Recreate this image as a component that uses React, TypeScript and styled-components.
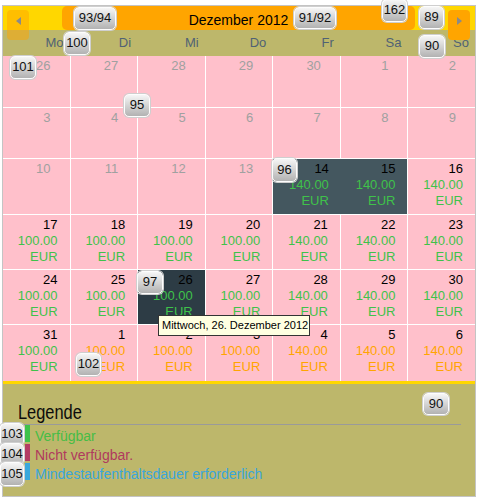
import React from 'react';
import styled, { createGlobalStyle } from 'styled-components';

const Global = createGlobalStyle`
  html, body { margin: 0; padding: 0; background: #fff; }
  body { font-family: "Liberation Sans", Arial, sans-serif; }
  * { box-sizing: border-box; }
`;

const Page = styled.div`
  position: relative;
  width: 481px;
  height: 502px;
  padding: 5px 0 0 2px;
`;

const Widget = styled.div`
  width: 474px;
  border: 1px solid #c4c4c4;
  background: #fff;
`;

const Header = styled.div`
  height: 24px;
  background: #ffd700;
  padding: 0 60px 0 59px;
`;

const TitleBar = styled.div`
  height: 24px;
  background: #ffa500;
  border-radius: 5px;
  text-align: center;
  font-size: 14px;
  line-height: 20px;
  padding-top: 4px;
  color: #000;
`;

const DayRow = styled.div`
  display: grid;
  grid-template-columns: repeat(7, 1fr);
  column-gap: 1px;
  height: 26px;
  background: #bdb76b;
`;

const DayName = styled.div`
  text-align: right;
  padding-right: 6px;
  font-size: 13px;
  line-height: 26px;
  color: #506274;
`;

const Grid = styled.div`
  display: grid;
  grid-template-columns: repeat(7, 1fr);
  grid-template-rows: 51px 50px 55px 54px 54px 56px;
  gap: 1px;
  background: #fff;
`;

type Tone = 'pink' | 'dark' | 'darker';

const Cell = styled.div<{ $tone: Tone; $muted: boolean; $joinRight?: boolean }>`
  background: ${(p) => (p.$tone === 'dark' ? '#44575f' : p.$tone === 'darker' ? '#2d3c45' : '#ffc0cb')};
  padding: 2px ${(p) => (p.$muted ? 19 : 12)}px 0 0;
  margin-right: ${(p) => (p.$joinRight ? -1 : 0)}px;
  text-align: right;
  font-size: 13px;
  line-height: 16px;
`;

const DayNum = styled.div<{ $muted: boolean }>`
  color: ${(p) => (p.$muted ? '#a0a0a0' : '#000')};
`;

const Price = styled.div<{ $next: boolean }>`
  color: ${(p) => (p.$next ? '#ffa500' : '#3fc24a')};
`;

const Legend = styled.div`
  border-top: 3px solid #ffd700;
  background: #bdb76b;
  padding: 16px 14px 14px 15px;
`;

const LegendTitle = styled.h2`
  margin: 0;
  font-weight: normal;
  font-size: 20px;
  line-height: 24px;
  height: 25px;
  color: #000;
  border-bottom: 1px solid #9a9a9a;
`;

const TitleText = styled.span`
  display: inline-block;
  font-family: "Liberation Sans Narrow", "Liberation Sans", sans-serif;
  transform: scaleX(0.82);
  transform-origin: left center;
  color: #0c0c0c;
`;

const LegendList = styled.div`
  display: grid;
  grid-template-rows: repeat(3, 19px);
  padding-left: 7px;
`;

const LegendItem = styled.div`
  display: flex;
  align-items: flex-start;
  height: 19px;
`;

const LegendBar = styled.span<{ $color: string }>`
  width: 5px;
  height: 17px;
  background: ${(p) => p.$color};
`;

const LegendText = styled.span<{ $color: string }>`
  margin-left: 5px;
  font-size: 14px;
  line-height: 17px;
  padding-top: 3px;
  color: ${(p) => p.$color};
`;

const NavButton = styled.div<{ $x: number; $dim?: boolean }>`
  position: absolute;
  left: ${(p) => p.$x}px;
  top: 10px;
  width: 22px;
  height: 30px;
  border-radius: 4px;
  background: ${(p) => (p.$dim ? 'rgba(255,165,0,0.5)' : '#ffa500')};
  display: flex;
  justify-content: center;
  padding-top: 7px;
`;

const Arrow = styled.span<{ $dir: 'left' | 'right' }>`
  width: 0;
  height: 0;
  border-top: 4px solid transparent;
  border-bottom: 4px solid transparent;
  ${(p) => (p.$dir === 'left' ? 'border-right: 5px solid #8a8a8a;' : 'border-left: 5px solid #8a8a8a;')}
`;

const Tooltip = styled.div`
  position: absolute;
  left: 158px;
  top: 315px;
  width: 152px;
  height: 21px;
  border: 1px solid #333;
  background: #ffffe1;
  font-size: 11px;
  line-height: 19px;
  padding-left: 3px;
  color: #000;
  white-space: nowrap;
`;

const Badge = styled.div<{ $x: number; $y: number; $w: number; $h: number }>`
  position: absolute;
  left: ${(p) => p.$x}px;
  top: ${(p) => p.$y}px;
  width: ${(p) => p.$w}px;
  height: ${(p) => p.$h}px;
  border: 1px solid #fdfdfd;
  border-radius: 5px;
  box-shadow: 0 0 0 1px #cfcfcf;
  background: linear-gradient(#f6f6f6, #b2b2b2);
  font-size: 13px;
  line-height: ${(p) => p.$h - 3}px;
  text-align: center;
  color: #111;
  white-space: nowrap;
`;

type Day = { n: number; muted?: boolean; price?: string; next?: boolean; tone?: Tone; join?: boolean };

const g = (n: number): Day => ({ n, muted: true });
const p = (n: number, price: string, extra: Partial<Day> = {}): Day => ({ n, price, ...extra });

const weeks: Day[][] = [
  [g(26), g(27), g(28), g(29), g(30), g(1), g(2)],
  [g(3), g(4), g(5), g(6), g(7), g(8), g(9)],
  [g(10), g(11), g(12), g(13), p(14, '140.00', { tone: 'dark', join: true }), p(15, '140.00', { tone: 'dark' }), p(16, '140.00')],
  [p(17, '100.00'), p(18, '100.00'), p(19, '100.00'), p(20, '100.00'), p(21, '140.00'), p(22, '140.00'), p(23, '140.00')],
  [p(24, '100.00'), p(25, '100.00'), p(26, '100.00', { tone: 'darker' }), p(27, '100.00'), p(28, '140.00'), p(29, '140.00'), p(30, '140.00')],
  [p(31, '100.00'), p(1, '100.00', { next: true }), p(2, '100.00', { next: true }), p(3, '100.00', { next: true }), p(4, '140.00', { next: true }), p(5, '140.00', { next: true }), p(6, '140.00', { next: true })],
];

const dayNames = ['Mo', 'Di', 'Mi', 'Do', 'Fr', 'Sa', 'So'];

const badges: { t: string; x: number; y: number; w: number; h: number }[] = [
  { t: '93/94', x: 74, y: 7, w: 42, h: 23 },
  { t: '91/92', x: 294, y: 7, w: 42, h: 22 },
  { t: '162', x: 382, y: -1, w: 25, h: 23 },
  { t: '89', x: 419, y: 6, w: 25, h: 23 },
  { t: '100', x: 64, y: 32, w: 26, h: 23 },
  { t: '90', x: 419, y: 35, w: 26, h: 23 },
  { t: '101', x: 10, y: 56, w: 26, h: 23 },
  { t: '95', x: 124, y: 94, w: 26, h: 23 },
  { t: '96', x: 272, y: 158, w: 25, h: 24 },
  { t: '97', x: 137, y: 271, w: 26, h: 23 },
  { t: '102', x: 76, y: 353, w: 25, h: 23 },
  { t: '90', x: 423, y: 393, w: 26, h: 22 },
  { t: '103', x: 0, y: 423, w: 24, h: 23 },
  { t: '104', x: 0, y: 443, w: 24, h: 22 },
  { t: '105', x: 0, y: 462, w: 24, h: 24 },
];

const legend = [
  { label: 'Verfügbar', bar: '#3fc24a', text: '#46bd46' },
  { label: 'Nicht verfügbar.', bar: '#b43c64', text: '#b03a5e' },
  { label: 'Mindestaufenthaltsdauer erforderlich', bar: '#3aa8dc', text: '#3aa6dc' },
];

export default function App() {
  return (
    <Page>
      <Global />
      <Widget>
        <Header>
          <TitleBar>Dezember 2012</TitleBar>
        </Header>
        <DayRow>
          {dayNames.map((d) => (
            <DayName key={d}>{d}</DayName>
          ))}
        </DayRow>
        <Grid>
          {weeks.flat().map((d, i) => (
            <Cell key={i} $tone={d.tone ?? 'pink'} $muted={!!d.muted} $joinRight={d.join}>
              <DayNum $muted={!!d.muted}>{d.n}</DayNum>
              {d.price && (
                <>
                  <Price $next={!!d.next}>{d.price}</Price>
                  <Price $next={!!d.next}>EUR</Price>
                </>
              )}
            </Cell>
          ))}
        </Grid>
        <Legend>
          <LegendTitle>
            <TitleText>Legende</TitleText>
          </LegendTitle>
          <LegendList>
            {legend.map((l) => (
              <LegendItem key={l.label}>
                <LegendBar $color={l.bar} />
                <LegendText $color={l.text}>{l.label}</LegendText>
              </LegendItem>
            ))}
          </LegendList>
        </Legend>
      </Widget>
      <NavButton $x={7} $dim>
        <Arrow $dir="left" />
      </NavButton>
      <NavButton $x={448}>
        <Arrow $dir="right" />
      </NavButton>
      <Tooltip>Mittwoch, 26. Dezember 2012</Tooltip>
      {badges.map((b, i) => (
        <Badge key={i} $x={b.x} $y={b.y} $w={b.w} $h={b.h}>
          {b.t}
        </Badge>
      ))}
    </Page>
  );
}
